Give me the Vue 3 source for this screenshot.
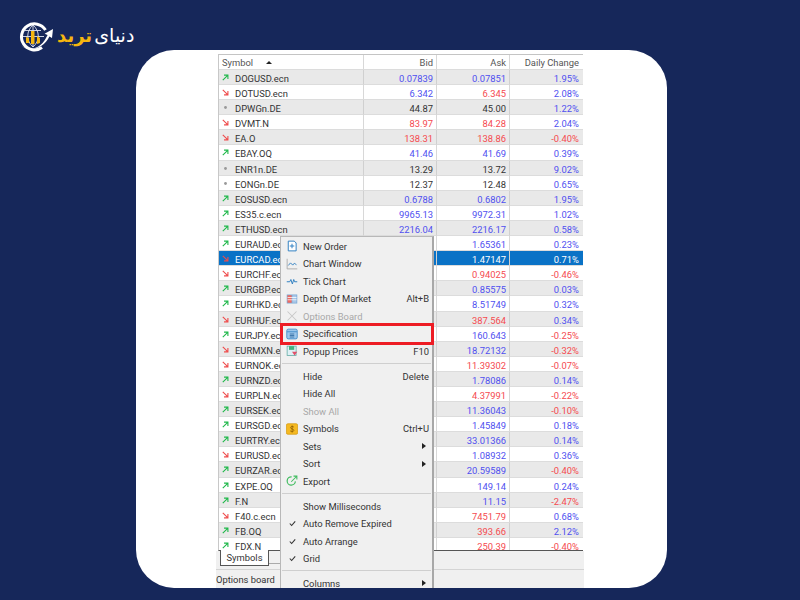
<script setup>
// d = direction, colours: b blue, r red, k dark
const rows = [
  ['DOGUSD.ecn', 'up', '0.07839', 'b', '0.07851', 'b', '1.95%', 'b'],
  ['DOTUSD.ecn', 'down', '6.342', 'b', '6.345', 'r', '2.08%', 'b'],
  ['DPWGn.DE', 'dot', '44.87', 'k', '45.00', 'k', '1.22%', 'b'],
  ['DVMT.N', 'down', '83.97', 'r', '84.28', 'r', '2.04%', 'b'],
  ['EA.O', 'down', '138.31', 'r', '138.86', 'r', '-0.40%', 'r'],
  ['EBAY.OQ', 'up', '41.46', 'b', '41.69', 'b', '0.39%', 'b'],
  ['ENR1n.DE', 'dot', '13.29', 'k', '13.72', 'k', '9.02%', 'b'],
  ['EONGn.DE', 'dot', '12.37', 'k', '12.48', 'k', '0.65%', 'b'],
  ['EOSUSD.ecn', 'up', '0.6788', 'b', '0.6802', 'b', '1.95%', 'b'],
  ['ES35.c.ecn', 'up', '9965.13', 'b', '9972.31', 'b', '1.02%', 'b'],
  ['ETHUSD.ecn', 'up', '2216.04', 'b', '2216.17', 'b', '0.58%', 'b'],
  ['EURAUD.ecn', 'up', '', 'b', '1.65361', 'b', '0.23%', 'b'],
  ['EURCAD.ecn', 'down', '', 'b', '1.47147', 'b', '0.71%', 'b'],
  ['EURCHF.ecn', 'down', '', 'r', '0.94025', 'r', '-0.46%', 'r'],
  ['EURGBP.ecn', 'up', '', 'b', '0.85575', 'b', '0.03%', 'b'],
  ['EURHKD.ecn', 'up', '', 'b', '8.51749', 'b', '0.32%', 'b'],
  ['EURHUF.ecn', 'down', '', 'r', '387.564', 'r', '0.34%', 'b'],
  ['EURJPY.ecn', 'up', '', 'b', '160.643', 'b', '-0.25%', 'r'],
  ['EURMXN.ecn', 'down', '', 'b', '18.72132', 'b', '-0.32%', 'r'],
  ['EURNOK.ecn', 'down', '', 'r', '11.39302', 'r', '-0.07%', 'r'],
  ['EURNZD.ecn', 'up', '', 'b', '1.78086', 'b', '0.14%', 'b'],
  ['EURPLN.ecn', 'down', '', 'r', '4.37991', 'r', '-0.22%', 'r'],
  ['EURSEK.ecn', 'up', '', 'b', '11.36043', 'b', '-0.10%', 'r'],
  ['EURSGD.ecn', 'up', '', 'b', '1.45849', 'b', '0.18%', 'b'],
  ['EURTRY.ecn', 'up', '', 'b', '33.01366', 'b', '0.14%', 'b'],
  ['EURUSD.ecn', 'down', '', 'b', '1.08932', 'b', '0.36%', 'b'],
  ['EURZAR.ecn', 'up', '', 'b', '20.59589', 'b', '-0.40%', 'r'],
  ['EXPE.OQ', 'up', '', 'b', '149.14', 'b', '0.24%', 'b'],
  ['F.N', 'up', '', 'b', '11.15', 'b', '-2.47%', 'r'],
  ['F40.c.ecn', 'down', '', 'r', '7451.79', 'r', '0.68%', 'b'],
  ['FB.OQ', 'up', '', 'r', '393.66', 'r', '2.12%', 'b'],
  ['FDX.N', 'up', '', 'r', '250.39', 'r', '-0.40%', 'r'],
]

const menu = [
  { label: 'New Order', icon: 'order' },
  { label: 'Chart Window', icon: 'chart' },
  { label: 'Tick Chart', icon: 'tick' },
  { label: 'Depth Of Market', icon: 'depth', key: 'Alt+B' },
  { label: 'Options Board', icon: 'options', off: true },
  { label: 'Specification', icon: 'spec', mark: true },
  { label: 'Popup Prices', icon: 'popup', key: 'F10' },
  { sep: true },
  { label: 'Hide', key: 'Delete' },
  { label: 'Hide All' },
  { label: 'Show All', off: true },
  { label: 'Symbols', icon: 'symbols', key: 'Ctrl+U' },
  { label: 'Sets', more: true },
  { label: 'Sort', more: true },
  { label: 'Export', icon: 'export' },
  { sep: true },
  { label: 'Show Milliseconds' },
  { label: 'Auto Remove Expired', check: true },
  { label: 'Auto Arrange', check: true },
  { label: 'Grid', check: true },
  { sep: true },
  { label: 'Columns', more: true },
]
</script>

<template>
  <div class="page">
    <header class="top">
      <div class="logo">
        <svg width="36" height="32" viewBox="0 0 36 32" fill="none" aria-hidden="true">
          <path d="M24 26.5A13 13 0 1 1 27.5 9" stroke="#fff" stroke-width="3" />
          <path d="M5 15.5h21M15 4v22M15 4c-7 6-7 16 0 22M15 4c7 6 7 16 0 22M7 9.5h16" stroke="#dfe3ee" stroke-width="0.9" />
          <path d="M8 22v-6l3 1v5zM13 23v-13h3.5v13zM19 23v-8l3 2v5z" fill="#f5b60f" />
          <path d="M3 24c8 7 19 4 25-7l1.6-3-3-1.2L35 8l-1 9-2.6-1.4C26 28 10 32 3 24z" fill="#fff" />
        </svg>
        <span class="logo-text" dir="rtl"><span class="white">دنیای</span> <span class="gold">ترید</span></span>
      </div>
    </header>

    <main class="card">
      <section class="win">
        <div class="table">
          <div class="row head">
            <div class="cell sym"><span>Symbol</span><i class="sort"></i></div>
            <div class="cell num">Bid</div>
            <div class="cell num">Ask</div>
            <div class="cell num last">Daily Change</div>
          </div>
          <div
            v-for="(r, i) in rows"
            :key="r[0]"
            class="row"
            :class="{ alt: i % 2 === 0, sel: r[0] === 'EURCAD.ecn' }"
          >
            <div class="cell sym">
              <svg v-if="r[1] === 'up'" class="arrow" viewBox="0 0 9 9" fill="none">
                <path d="M1 8l6-6M2.6 1.5h5v5" stroke="#1fb84a" stroke-width="1.4" />
              </svg>
              <svg v-else-if="r[1] === 'down'" class="arrow" viewBox="0 0 9 9" fill="none">
                <path d="M1 1l6 6M2.6 7.5h5v-5" stroke="#ef4b4b" stroke-width="1.4" />
              </svg>
              <svg v-else class="arrow" viewBox="0 0 9 9">
                <circle cx="4.5" cy="4.5" r="1.8" fill="#999" />
              </svg>
              <span>{{ r[0] }}</span>
            </div>
            <div class="cell num" :class="r[3]">{{ r[2] }}</div>
            <div class="cell num" :class="r[5]">{{ r[4] }}</div>
            <div class="cell num last" :class="r[7]">{{ r[6] }}</div>
          </div>
        </div>

        <div class="tabs">
          <div class="tab">Symbols</div>
          <div class="tab second"></div>
        </div>
        <div class="status">Options board</div>

        <nav class="menu">
          <template v-for="(m, i) in menu" :key="i">
            <div v-if="m.sep" class="sep"></div>
            <div v-else class="item" :class="{ off: m.off, mark: m.mark }">
              <span class="ico">
                <svg v-if="m.icon === 'order'" viewBox="0 0 16 16" fill="none">
                  <path d="M3 1.5h8l2.5 2.5v10.5H3z" fill="#fff" stroke="#2f7fc1" stroke-width="1.3" />
                  <path d="M8 5v6M5 8h6" stroke="#2f7fc1" stroke-width="1.3" />
                </svg>
                <svg v-else-if="m.icon === 'chart'" viewBox="0 0 16 16" fill="none">
                  <path d="M1.5 1v13.5H15" stroke="#a9a9a9" stroke-width="1.2" />
                  <path d="M3 10l3-3.5 3 3 2-2.5 3 2" stroke="#2f7fc1" stroke-width="1.2" />
                </svg>
                <svg v-else-if="m.icon === 'tick'" viewBox="0 0 16 16" fill="none">
                  <path d="M1 9h4l1.5-3 2 6 1.8-6 1.2 3H15" stroke="#2f7fc1" stroke-width="1.3" />
                </svg>
                <svg v-else-if="m.icon === 'depth'" viewBox="0 0 16 16">
                  <rect x="1" y="2" width="14" height="12" fill="#7aa9d6" />
                  <rect x="2" y="3" width="5.5" height="10" fill="#ef6a60" />
                  <rect x="8.5" y="3" width="5.5" height="10" fill="#a9c7e8" />
                  <path d="M2 6h12M2 9h12" stroke="#fff" stroke-width="1" />
                </svg>
                <svg v-else-if="m.icon === 'options'" viewBox="0 0 16 16" fill="none">
                  <path d="M2 2l12 12M14 2L2 14" stroke="#c8c8c8" stroke-width="1.4" />
                </svg>
                <svg v-else-if="m.icon === 'spec'" viewBox="0 0 16 16">
                  <rect x="1" y="1.5" width="14" height="13" rx="2" fill="#9cc6ea" stroke="#2f7fc1" />
                  <path d="M1.5 5h13" stroke="#2f7fc1" />
                  <path d="M5 8h6M5 10h6M5 12h6" stroke="#24619a" stroke-width="1" />
                </svg>
                <svg v-else-if="m.icon === 'popup'" viewBox="0 0 16 16">
                  <rect x="1.5" y="1.5" width="12" height="12.5" fill="#dff0f5" stroke="#5aa7a0" />
                  <path d="M4 1.5h7v5H4z" fill="#43b27f" />
                  <path d="M8 9h7l-3.5 5z" fill="#e2506a" />
                </svg>
                <svg v-else-if="m.icon === 'symbols'" viewBox="0 0 16 16">
                  <rect x="0.5" y="1" width="15" height="14" rx="2" fill="#f5b921" stroke="#d49a10" />
                  <path d="M10.5 5.5C9.5 4.3 6 4.3 6 6.2c0 2 4.5 1.4 4.5 3.6 0 2-3.8 1.9-5 .6M8.2 3.2v9.6" fill="none" stroke="#8a5a00" stroke-width="1" />
                </svg>
                <svg v-else-if="m.icon === 'export'" viewBox="0 0 16 16" fill="none">
                  <path d="M12.5 8.5a5.5 5.5 0 1 1-5-6" stroke="#3fbb5e" stroke-width="1.6" />
                  <path d="M7 9l7-7M10 1.5h4.5V6" stroke="#3fbb5e" stroke-width="1.4" />
                </svg>
                <svg v-else-if="m.check" class="check" viewBox="0 0 9 9" fill="none">
                  <path d="M1 4.5l2.4 2.6L8 1.8" stroke="#333" stroke-width="1.4" />
                </svg>
              </span>
              <span class="label">{{ m.label }}</span>
              <span v-if="m.key" class="key">{{ m.key }}</span>
              <i v-if="m.more" class="more"></i>
            </div>
          </template>
        </nav>
      </section>
    </main>
  </div>
</template>

<style>
html,
body {
  margin: 0;
  background: #16275a;
}
</style>

<style scoped>
.page {
  width: 800px;
  height: 600px;
  overflow: hidden;
  background: #16275a;
  font-family: Roboto, 'Noto Sans', sans-serif;
}

.top {
  height: 50px;
  box-sizing: border-box;
  padding: 22px 0 0 18px;
}

.logo {
  display: flex;
  align-items: center;
  gap: 3px;
  height: 30px;
}

.logo-text {
  font-family: 'DejaVu Sans', sans-serif;
  line-height: 1;
  margin-top: -4px;
  word-spacing: -3px;
}

.white {
  color: #fff;
  font-size: 19px;
}

.gold {
  color: #f5b60f;
  font-size: 18px;
  font-weight: 700;
}

.card {
  width: 531px;
  height: 538px;
  margin-left: 136px;
  background: #fff;
  border-radius: 38px;
  overflow: hidden;
  padding: 3px 0 0 80px;
  box-sizing: border-box;
}

.win {
  position: relative;
  width: 368px;
  height: 535px;
  background: #fff;
  overflow: hidden;
}

.table {
  margin: 1px 0 0 2px;
  width: 365px;
  height: 497px;
  overflow: hidden;
  background: #fff;
  border-left: 1px solid #c8c8c8;
  border-top: 1px solid #c4c4c4;
  border-bottom: 1px solid #555;
  box-sizing: border-box;
}

.row {
  display: grid;
  grid-template-columns: 145px 73px 73px 73px;
  height: 15.1px;
  font-size: 9.4px;
  line-height: 17.5px;
  color: #333;
}

.row.head {
  height: 15px;
  line-height: 15px;
  color: #555;
  background: #fff;
}

.row.alt {
  background: #e9e9e9;
}

.row.sel {
  background: #0a72c6;
}

.row.sel .cell {
  color: #fff;
}

.cell {
  border-right: 1px solid #d8d8d8;
  border-bottom: 1px solid #dcdcdc;
  overflow: hidden;
  white-space: nowrap;
  box-sizing: border-box;
}

.row.alt .cell {
  border-right-color: #d0d0d0;
}

.sym {
  display: flex;
  align-items: flex-start;
  padding-left: 3px;
}

.head .sym {
  align-items: center;
}

.arrow {
  width: 7px;
  height: 7px;
  margin: 4px 6px 0 0;
  flex: none;
}

.sort {
  width: 0;
  height: 0;
  margin-left: 13px;
  border-left: 3px solid transparent;
  border-right: 3px solid transparent;
  border-bottom: 3px solid #222;
}

.num {
  text-align: right;
  padding-right: 3px;
}

.last {
  padding-right: 4px;
  border-right: 0;
}

.b {
  color: #4f4ff0;
}

.r {
  color: #f5494f;
}

.k {
  color: #333;
}

.tabs {
  display: flex;
  padding-left: 3px;
  height: 19px;
  background: #f0f0f0;
  border-bottom: 1px solid #d4d4d4;
  box-sizing: border-box;
}

.tab {
  width: 49px;
  height: 16px;
  margin: -1px 0 0 1px;
  box-sizing: border-box;
  background: #fff;
  border: 1px solid #555;
  border-top: 0;
  font-size: 9.4px;
  line-height: 15px;
  text-align: center;
  color: #333;
}

.tab.second {
  width: 14px;
  margin: 0;
  height: 13px;
  background: #f0f0f0;
  border-color: #aaa;
  border-left: 0;
}

.status {
  height: 20px;
  background: #f0f0f0;
  font-size: 9.4px;
  line-height: 20px;
  color: #333;
}

.menu {
  position: absolute;
  left: 64px;
  top: 183px;
  width: 154px;
  height: 360px;
  box-sizing: border-box;
  padding-top: 0.7px;
  background: #f0f0f0;
  border: 1px solid #b8b8b8;
  border-right: 2px solid #a8a8a8;
  font-size: 9.4px;
  color: #333;
}

.item {
  display: flex;
  align-items: center;
  height: 17.5px;
  position: relative;
  padding-right: 3px;
}

.item.off {
  color: #a8a8a8;
}

.item.mark::after {
  content: '';
  position: absolute;
  left: -1px;
  right: -2px;
  top: -2px;
  bottom: -2px;
  border: 3px solid #ed1c24;
}

.ico {
  width: 12px;
  margin: 0 5px 0 5px;
  flex: none;
  display: flex;
  align-items: center;
  justify-content: center;
}

.ico svg {
  width: 12px;
  height: 12px;
}

.ico svg.check {
  width: 7px;
  height: 7px;
}

.item .label {
  flex: 1;
}

.key {
  white-space: nowrap;
}

.more {
  width: 0;
  height: 0;
  margin-right: 3px;
  border-top: 3px solid transparent;
  border-bottom: 3px solid transparent;
  border-left: 4px solid #222;
}

.sep {
  height: 1px;
  margin: 3px 1px 3.3px;
  background: #cfcfcf;
}
</style>
